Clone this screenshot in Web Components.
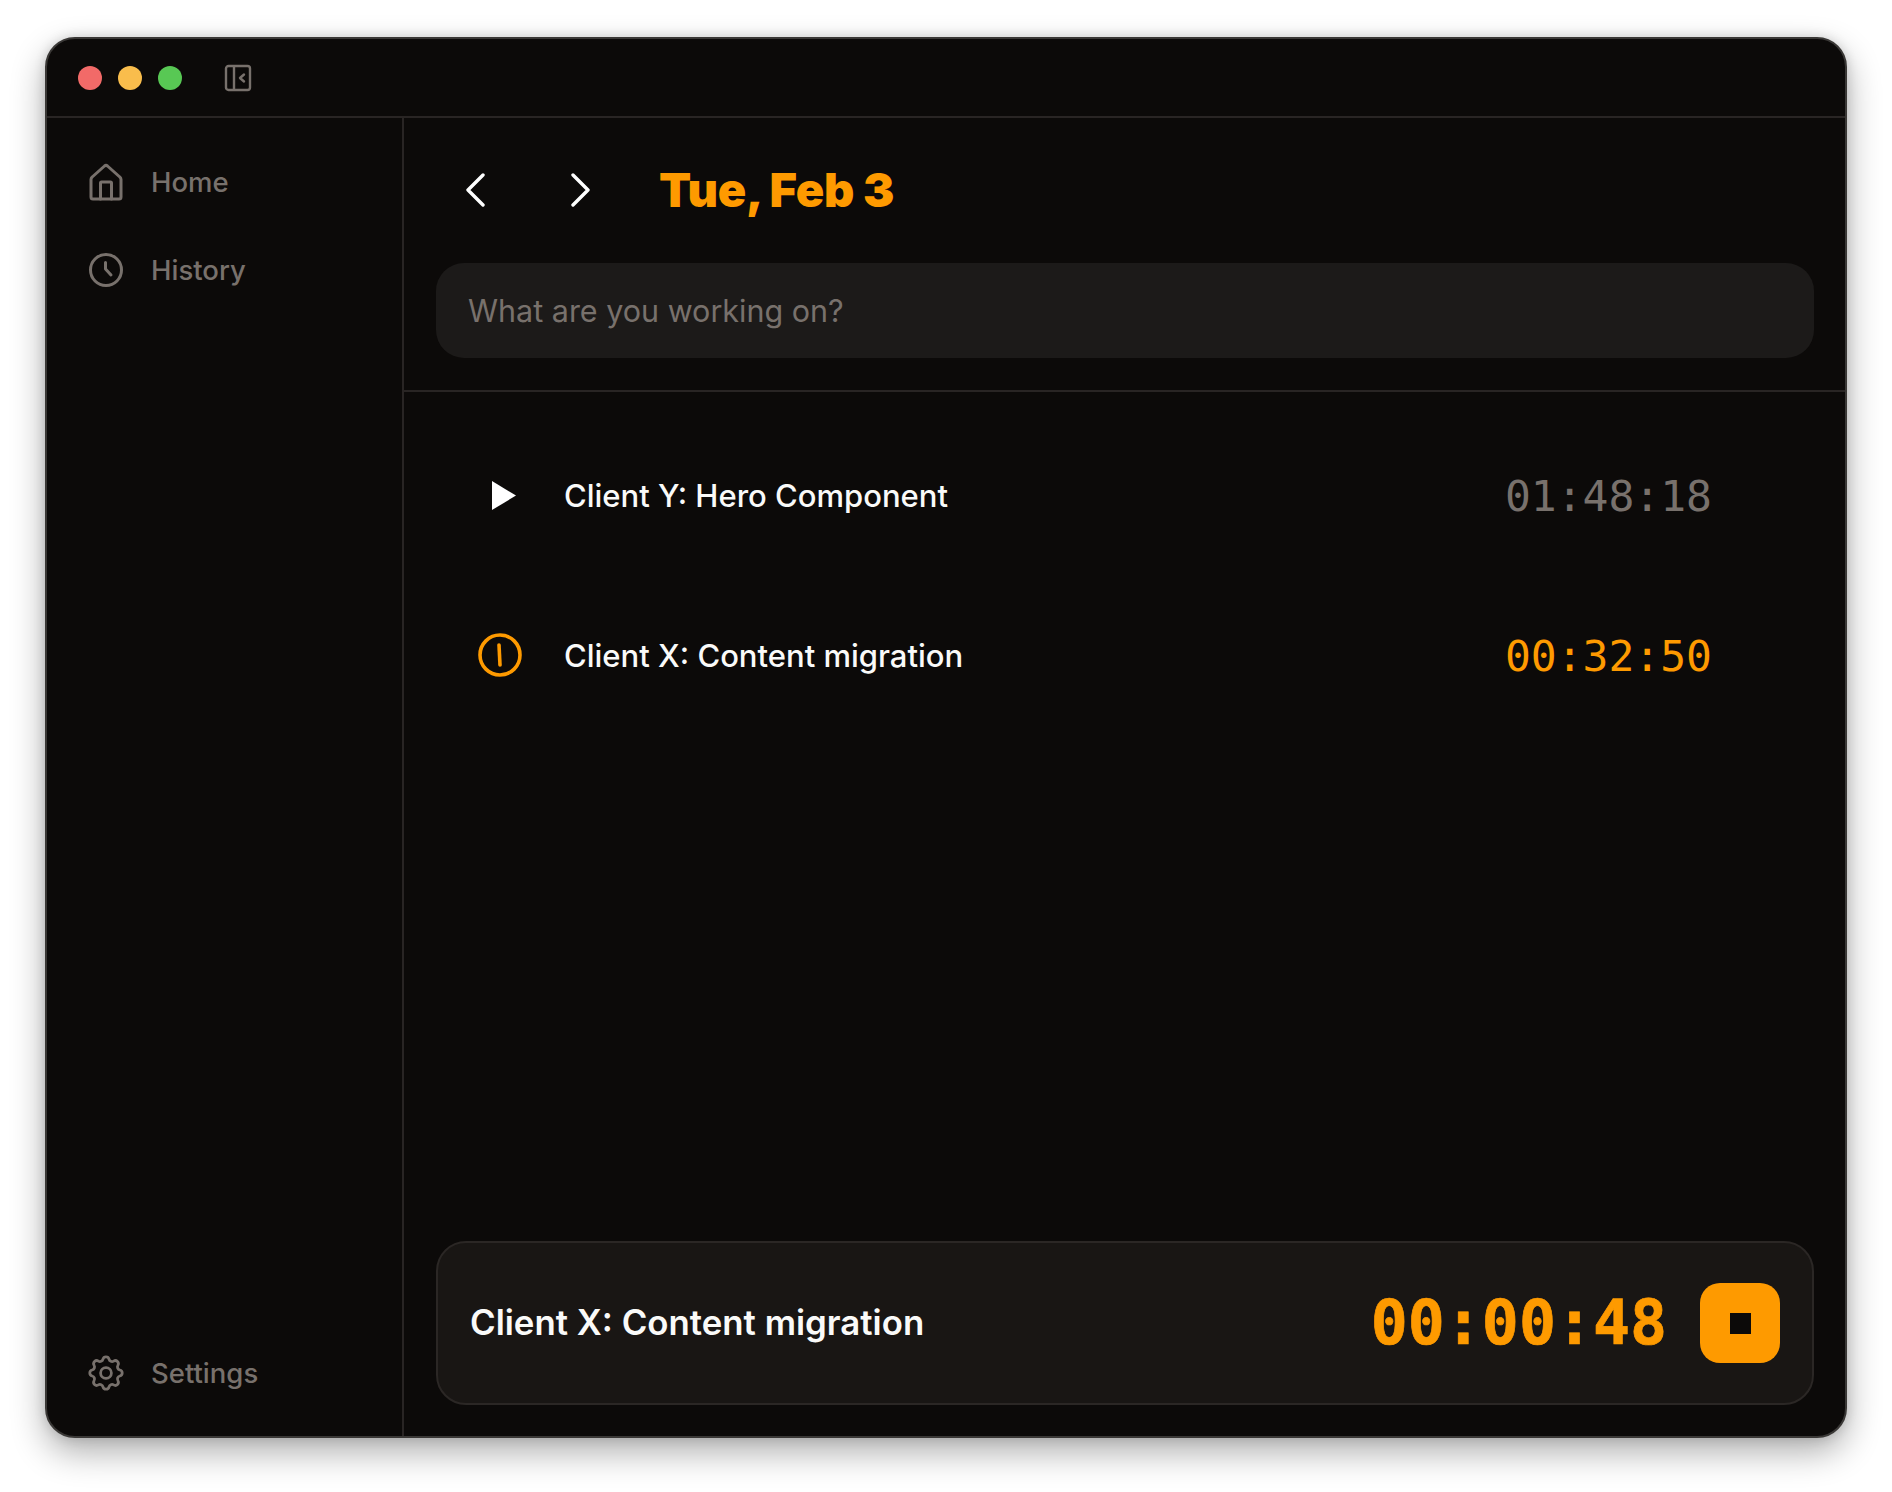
<!DOCTYPE html>
<html lang="en">
<head>
<meta charset="utf-8">
<title>Time tracker</title>
<style>
  html, body { margin: 0; background: #fff; }
  body { width: 1892px; height: 1492px; overflow: hidden; font-family: Inter, "Liberation Sans", sans-serif; }
</style>
</head>
<body>
<app-window>
  <title-bar slot="top"></title-bar>
  <side-nav slot="side">
    <nav-item icon="home">Home</nav-item>
    <nav-item icon="clock">History</nav-item>
    <nav-item icon="gear" slot="bottom">Settings</nav-item>
  </side-nav>
  <day-header>Tue, Feb 3</day-header>
  <task-input>What are you working on?</task-input>
  <task-list>
    <task-row time="01:48:18">Client Y: Hero Component</task-row>
    <task-row time="00:32:50" running>Client X: Content migration</task-row>
  </task-list>
  <active-timer time="00:00:48">Client X: Content migration</active-timer>
</app-window>

<script>
const ICONS = {
  home: `<svg viewBox="0 0 40 40"><path d="M5 17.5Q5 16 6.2 15L18.5 4Q20 2.8 21.5 4L33.8 15Q35 16 35 17.5V35Q35 37 33 37H7Q5 37 5 35Z"/><path d="M14.5 37V21Q14.5 20 15.5 20H24.5Q25.5 20 25.5 21V37"/></svg>`,
  clock: `<svg viewBox="0 0 40 40"><circle cx="20" cy="20" r="15.5"/><path d="M19.5 12.5V19L25 25"/></svg>`,
  gear: `<svg viewBox="0 0 24 24" style="stroke-width:1.55;transform:scale(1.08)"><path d="M10.325 4.317c.426-1.756 2.924-1.756 3.35 0a1.724 1.724 0 0 0 2.573 1.066c1.543-.94 3.31.826 2.37 2.37a1.724 1.724 0 0 0 1.065 2.572c1.756.426 1.756 2.924 0 3.35a1.724 1.724 0 0 0-1.066 2.573c.94 1.543-.826 3.31-2.37 2.37a1.724 1.724 0 0 0-2.572 1.065c-.426 1.756-2.924 1.756-3.35 0a1.724 1.724 0 0 0-2.573-1.066c-1.543.94-3.31-.826-2.37-2.37a1.724 1.724 0 0 0-1.065-2.572c-1.756-.426-1.756-2.924 0-3.35a1.724 1.724 0 0 0 1.066-2.573c-.94-1.543.826-3.31 2.37-2.37c1 .608 2.296.07 2.572-1.065z"/><circle cx="12" cy="12" r="3"/></svg>`
};

class AppWindow extends HTMLElement {
  constructor() {
    super();
    this.attachShadow({mode: "open"}).innerHTML = `
    <style>
      :host {
        display: grid;
        grid-template-columns: 357px 1fr;
        grid-template-rows: 79px 1fr;
        box-sizing: border-box;
        width: 1802px;
        height: 1401px;
        margin: 37px 0 0 45px;
        background: #0c0a09;
        border: 2px solid #3a3836;
        border-radius: 30px;
        box-shadow: 0 14px 34px rgba(0,0,0,.32), 0 0 12px rgba(0,0,0,.14);
        overflow: hidden;
        color: #fff;
        font-family: Inter, "Liberation Sans", sans-serif;
      }
      .top { grid-column: 1 / 3; border-bottom: 2px solid #292524; }
      .side { border-right: 2px solid #292524; min-height: 0; display: flex; }
      .main { display: flex; flex-direction: column; min-height: 0; }
    </style>
    <div class="top"><slot name="top"></slot></div>
    <div class="side"><slot name="side"></slot></div>
    <div class="main"><slot></slot></div>`;
  }
}

class TitleBar extends HTMLElement {
  constructor() {
    super();
    this.attachShadow({mode: "open"}).innerHTML = `
    <style>
      :host { display: flex; align-items: center; height: 77px; padding-left: 31px; }
      i { width: 24px; height: 24px; border-radius: 50%; margin-right: 16px; }
      svg { width: 28px; height: 28px; margin-left: 26px; fill: none; stroke: #78716c; stroke-width: 2.4; }
    </style>
    <i style="background:#f26a68"></i>
    <i style="background:#f9bd4c"></i>
    <i style="background:#58c854"></i>
    <svg viewBox="0 0 28 28">
      <rect x="2" y="2" width="24" height="24" rx="2.5"/>
      <path d="M10 2v24"/>
      <path d="M20 10.5 16 14l4 3.5" stroke-linecap="round" stroke-linejoin="round"/>
    </svg>`;
  }
}

class SideNav extends HTMLElement {
  constructor() {
    super();
    this.attachShadow({mode: "open"}).innerHTML = `
    <style>
      :host {
        display: flex; flex-direction: column; justify-content: space-between;
        width: 100%; box-sizing: border-box; padding: 42px 0 41px 39px;
      }
      .list { display: flex; flex-direction: column; gap: 44px; }
    </style>
    <div class="list"><slot></slot></div>
    <slot name="bottom"></slot>`;
  }
}

class NavItem extends HTMLElement {
  constructor() {
    super();
    this.attachShadow({mode: "open"}).innerHTML = `
    <style>
      :host { display: flex; align-items: center; gap: 25px; height: 44px; color: #78716c; font-size: 27.5px; font-weight: 500; }
      svg { width: 40px; height: 40px; fill: none; stroke: currentColor; stroke-width: 3; stroke-linecap: round; stroke-linejoin: round; }
    </style>
    ${ICONS[this.getAttribute("icon")]}
    <span><slot></slot></span>`;
  }
}

class DayHeader extends HTMLElement {
  constructor() {
    super();
    this.attachShadow({mode: "open"}).innerHTML = `
    <style>
      :host { display: flex; align-items: center; box-sizing: border-box; height: 145px; padding: 0 0 3px 61px; }
      svg { width: 20px; height: 34px; margin-top: 2px; fill: none; stroke: #fff; stroke-width: 3.4; stroke-linecap: round; stroke-linejoin: round; }
      .next { margin-left: 86px; }
      h1 { margin: 0 0 0 68px; color: #fe9a00; font-size: 47px; font-weight: 900; letter-spacing: -.3px; }
    </style>
    <svg viewBox="0 0 20 34"><path d="M18 2 3 17l15 15"/></svg>
    <svg class="next" viewBox="0 0 20 34"><path d="M2 2l15 15L2 32"/></svg>
    <h1><slot></slot></h1>`;
  }
}

class TaskInput extends HTMLElement {
  constructor() {
    super();
    this.attachShadow({mode: "open"}).innerHTML = `
    <style>
      :host { display: block; padding: 0 31px 32px 32px; border-bottom: 2px solid #292524; }
      .field {
        display: flex; align-items: center; height: 95px; padding: 0 32px; border-radius: 28px;
        background: #1c1a19; color: #78716c; font-size: 30.5px;
      }
    </style>
    <div class="field" role="textbox"><slot></slot></div>`;
  }
}

class TaskList extends HTMLElement {
  constructor() {
    super();
    this.attachShadow({mode: "open"}).innerHTML = `
    <style>
      :host { display: flex; flex-direction: column; gap: 80px; flex: 1; padding: 63px 133px 0 74px; }
    </style>
    <slot></slot>`;
  }
}

class TaskRow extends HTMLElement {
  constructor() {
    super();
    const running = this.hasAttribute("running");
    const icon = running
      ? `<svg viewBox="0 0 44 44" fill="none" stroke="#fe9a00" stroke-width="3.6" stroke-linecap="round"><circle cx="22" cy="22" r="20"/><path d="M21 12l1 20"/></svg>`
      : `<svg viewBox="0 0 44 44" fill="#fff"><path d="M14 8v29l24-14.5z"/></svg>`;
    this.attachShadow({mode: "open"}).innerHTML = `
    <style>
      :host { display: flex; align-items: center; height: 80px; font-size: 31px; font-weight: 500; color: #fafaf9; }
      svg { width: 44px; height: 44px; margin-right: 42px; flex: none; }
      .name { flex: 1; }
      .time { margin-top: 2px; font-family: "DejaVu Sans Mono", "Liberation Mono", monospace; font-size: 43px; font-weight: 400; color: ${running ? "#fe9a00" : "#78716c"}; }
    </style>
    ${icon}
    <span class="name"><slot></slot></span>
    <span class="time">${this.getAttribute("time")}</span>`;
  }
}

class ActiveTimer extends HTMLElement {
  constructor() {
    super();
    this.attachShadow({mode: "open"}).innerHTML = `
    <style>
      :host {
        display: flex; align-items: center; margin: 0 31px 31px 32px; height: 164px; box-sizing: border-box;
        padding: 0 32px; background: #191614; border: 2px solid #2b2725; border-radius: 30px;
        font-size: 34.8px; font-weight: 600; color: #fafaf9;
      }
      .name { flex: 1; margin-bottom: 2px; }
      .time { font-family: "DejaVu Sans Mono", "Liberation Mono", monospace; font-size: 61.5px; font-weight: 700; color: #fe9a00; margin-right: 33px; -webkit-text-stroke: .7px #fe9a00; }
      button { display: flex; align-items: center; justify-content: center; width: 80px; height: 80px; padding: 0; border: 0; border-radius: 20px; background: #fe9a00; }
      button i { width: 21px; height: 21px; background: #0c0a09; }
    </style>
    <span class="name"><slot></slot></span>
    <span class="time">${this.getAttribute("time")}</span>
    <button><i></i></button>`;
  }
}

customElements.define("app-window", AppWindow);
customElements.define("title-bar", TitleBar);
customElements.define("side-nav", SideNav);
customElements.define("nav-item", NavItem);
customElements.define("day-header", DayHeader);
customElements.define("task-input", TaskInput);
customElements.define("task-list", TaskList);
customElements.define("task-row", TaskRow);
customElements.define("active-timer", ActiveTimer);
</script>
</body>
</html>
